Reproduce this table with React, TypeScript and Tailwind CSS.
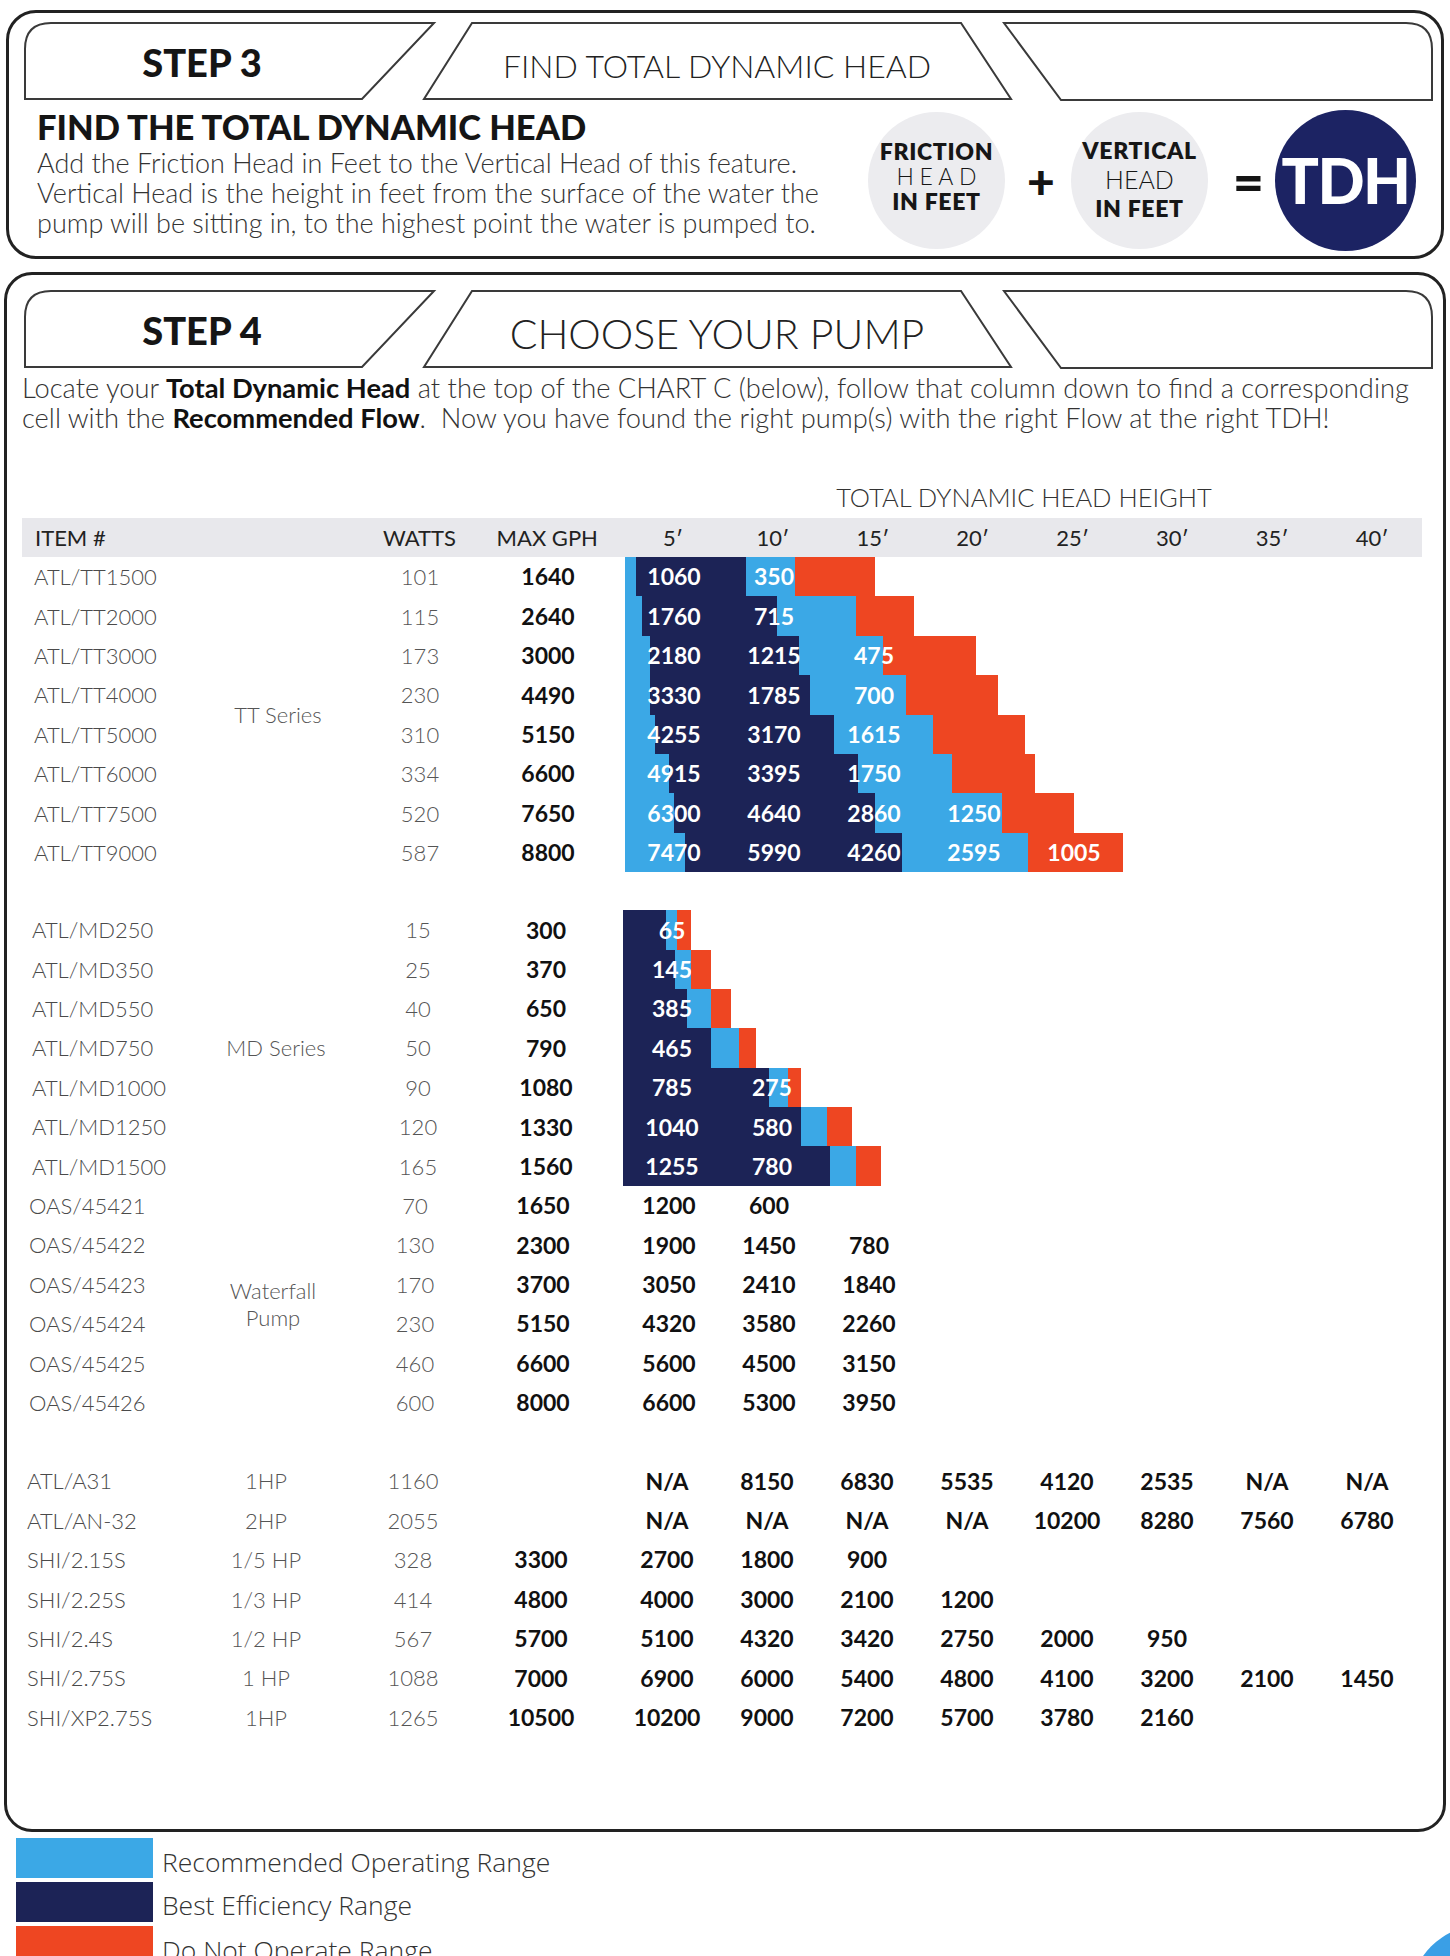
import React from "react";

const segCls = {
  l: "bg-[#3ba8e6]",
  n: "bg-[#1c2356]",
  r: "bg-[#ee4622]",
} as const;

type Seg = [keyof typeof segCls, number];

type Row = {
  item: string;
  hp?: string;
  watts: string;
  gph: string;
  vals: string[];
  seg?: Seg[];
};

type Group = {
  label?: string[];
  shift: string;
  onColor: boolean;
  rows: Row[];
};

const heads = ["5′", "10′", "15′", "20′", "25′", "30′", "35′", "40′"];

const groups: Group[] = [
  {
    label: ["TT Series"],
    shift: "",
    onColor: true,
    rows: [
      { item: "ATL/TT1500", watts: "101", gph: "1640", vals: ["1060", "350"], seg: [["l", 11], ["n", 110], ["l", 49], ["r", 80]] },
      { item: "ATL/TT2000", watts: "115", gph: "2640", vals: ["1760", "715"], seg: [["l", 17], ["n", 135], ["l", 79], ["r", 58]] },
      { item: "ATL/TT3000", watts: "173", gph: "3000", vals: ["2180", "1215", "475"], seg: [["l", 25], ["n", 149], ["l", 84], ["r", 93]] },
      { item: "ATL/TT4000", watts: "230", gph: "4490", vals: ["3330", "1785", "700"], seg: [["l", 25], ["n", 160], ["l", 96], ["r", 92]] },
      { item: "ATL/TT5000", watts: "310", gph: "5150", vals: ["4255", "3170", "1615"], seg: [["l", 30], ["n", 179], ["l", 99], ["r", 92]] },
      { item: "ATL/TT6000", watts: "334", gph: "6600", vals: ["4915", "3395", "1750"], seg: [["l", 44], ["n", 189], ["l", 94], ["r", 83]] },
      { item: "ATL/TT7500", watts: "520", gph: "7650", vals: ["6300", "4640", "2860", "1250"], seg: [["l", 49], ["n", 201], ["l", 127], ["r", 72]] },
      { item: "ATL/TT9000", watts: "587", gph: "8800", vals: ["7470", "5990", "4260", "2595", "1005"], seg: [["l", 60], ["n", 217], ["l", 126], ["r", 95]] },
    ],
  },
  {
    label: ["MD Series"],
    shift: "-ml-[2px]",
    onColor: true,
    rows: [
      { item: "ATL/MD250", watts: "15", gph: "300", vals: ["65"], seg: [["n", 43], ["l", 11], ["r", 14]] },
      { item: "ATL/MD350", watts: "25", gph: "370", vals: ["145"], seg: [["n", 52], ["l", 16], ["r", 20]] },
      { item: "ATL/MD550", watts: "40", gph: "650", vals: ["385"], seg: [["n", 64], ["l", 24], ["r", 20]] },
      { item: "ATL/MD750", watts: "50", gph: "790", vals: ["465"], seg: [["n", 88], ["l", 28], ["r", 17]] },
      { item: "ATL/MD1000", watts: "90", gph: "1080", vals: ["785", "275"], seg: [["n", 146], ["l", 19], ["r", 13]] },
      { item: "ATL/MD1250", watts: "120", gph: "1330", vals: ["1040", "580"], seg: [["n", 178], ["l", 26], ["r", 25]] },
      { item: "ATL/MD1500", watts: "165", gph: "1560", vals: ["1255", "780"], seg: [["n", 207], ["l", 26], ["r", 25]] },
    ],
  },
  {
    label: ["Waterfall", "Pump"],
    shift: "-ml-[5px]",
    onColor: false,
    rows: [
      { item: "OAS/45421", watts: "70", gph: "1650", vals: ["1200", "600"] },
      { item: "OAS/45422", watts: "130", gph: "2300", vals: ["1900", "1450", "780"] },
      { item: "OAS/45423", watts: "170", gph: "3700", vals: ["3050", "2410", "1840"] },
      { item: "OAS/45424", watts: "230", gph: "5150", vals: ["4320", "3580", "2260"] },
      { item: "OAS/45425", watts: "460", gph: "6600", vals: ["5600", "4500", "3150"] },
      { item: "OAS/45426", watts: "600", gph: "8000", vals: ["6600", "5300", "3950"] },
    ],
  },
];

const bottom: Group = {
  shift: "-ml-[7px]",
  onColor: false,
  rows: [
    { item: "ATL/A31", hp: "1HP", watts: "1160", gph: "", vals: ["N/A", "8150", "6830", "5535", "4120", "2535", "N/A", "N/A"] },
    { item: "ATL/AN-32", hp: "2HP", watts: "2055", gph: "", vals: ["N/A", "N/A", "N/A", "N/A", "10200", "8280", "7560", "6780"] },
    { item: "SHI/2.15S", hp: "1/5 HP", watts: "328", gph: "3300", vals: ["2700", "1800", "900"] },
    { item: "SHI/2.25S", hp: "1/3 HP", watts: "414", gph: "4800", vals: ["4000", "3000", "2100", "1200"] },
    { item: "SHI/2.4S", hp: "1/2 HP", watts: "567", gph: "5700", vals: ["5100", "4320", "3420", "2750", "2000", "950"] },
    { item: "SHI/2.75S", hp: "1 HP", watts: "1088", gph: "7000", vals: ["6900", "6000", "5400", "4800", "4100", "3200", "2100", "1450"] },
    { item: "SHI/XP2.75S", hp: "1HP", watts: "1265", gph: "10500", vals: ["10200", "9000", "7200", "5700", "3780", "2160"] },
  ],
};

function Tabs({ left, mid, ml, midCls }: { left: string; mid: string; ml: string; midCls: string }) {
  return (
    <div className={`relative h-[80px] w-[1420px] ${ml}`}>
      <svg className="absolute inset-0" width="1420" height="80" viewBox="0 0 1420 80" fill="white" stroke="#3a3a3a" strokeWidth="2">
        <path d="M7 77 L7 27 Q7 1 33 1 L416 1 L344 77 Z" />
        <path d="M454 1 L943 1 L993 77 L406 77 Z" />
        <path d="M986 1 L1388 1 Q1414 1 1414 27 L1414 78 L1043 78 Z" />
      </svg>
      <div className="relative flex h-full items-center">
        <div className="w-[368px] text-center text-[38px] font-black leading-none text-[#151515]">{left}</div>
        <div className={`w-[662px] text-center font-light leading-none text-[#222] ${midCls}`}>{mid}</div>
      </div>
    </div>
  );
}

function DataRow({ r, onColor }: { r: Row; onColor: boolean }) {
  return (
    <div className="flex h-[39.4px] items-center">
      <div className="w-[152px] text-center text-[22px] font-light text-[#555]">{r.watts}</div>
      <div className="w-[104px] text-center text-[23px] font-bold text-[#111]">{r.gph}</div>
      <div className="w-[24px]" />
      <div className="relative h-full w-[800px]">
        {r.seg && (
          <div className="absolute inset-y-0 left-px flex">
            {r.seg.map(([c, w], i) => (
              <div key={i} className={`h-full ${segCls[c]}`} style={{ width: w }} />
            ))}
          </div>
        )}
        <div className="relative grid h-full grid-cols-8 items-center">
          {r.vals.map((v, i) => (
            <div key={i} className={`text-center text-[23px] font-bold ${onColor ? "text-white" : "text-[#111]"}`}>
              {v}
            </div>
          ))}
        </div>
      </div>
    </div>
  );
}

function GroupBlock({ g }: { g: Group }) {
  return (
    <div className={`flex ${g.shift}`}>
      <div className="w-[190px]">
        {g.rows.map((r) => (
          <div key={r.item} className="flex h-[39.4px] items-center pl-[12px] text-[22px] font-light text-[#4a4a4a]">
            {r.item}
          </div>
        ))}
      </div>
      {g.label ? (
        <div className="flex w-[132px] flex-col items-center justify-center text-[22px] font-light leading-[27px] text-[#555]">
          {g.label.map((l) => (
            <span key={l}>{l}</span>
          ))}
        </div>
      ) : (
        <div className="w-[132px]">
          {g.rows.map((r) => (
            <div key={r.item} className="flex h-[39.4px] items-center justify-center pr-[10px] text-[22px] font-light text-[#555]">
              {r.hp}
            </div>
          ))}
        </div>
      )}
      <div>
        {g.rows.map((r) => (
          <DataRow key={r.item} r={r} onColor={g.onColor} />
        ))}
      </div>
    </div>
  );
}

function Circle({ top, mid, bottom, spaced }: { top: string; mid: string; bottom: string; spaced?: boolean }) {
  return (
    <div
      className={`flex h-[137px] w-[137px] flex-col items-center justify-center rounded-full bg-[#ececef] text-[23px] text-[#161616] ${
        spaced ? "gap-[3px] pb-[10px]" : "gap-[7px] pb-[4px]"
      }`}
    >
      <div className="font-extrabold leading-[22px] tracking-[0.03em]">{top}</div>
      <div className={`font-light leading-[22px] ${spaced ? "pl-[0.24em] tracking-[0.24em]" : "text-[25px]"}`}>{mid}</div>
      <div className="font-extrabold leading-[22px] tracking-[0.03em]">{bottom}</div>
    </div>
  );
}

export default function App() {
  return (
    <div className="relative h-[1956px] w-[1450px] overflow-hidden bg-white font-['Lato','Noto_Sans',sans-serif] text-[#222]">
      {/* Step 3 */}
      <section className="ml-[6px] mt-[10px] h-[249px] w-[1438px] rounded-[30px] border-[3px] border-[#222]">
        <Tabs left="STEP 3" mid="FIND TOTAL DYNAMIC HEAD" ml="ml-[9px] mt-[9px]" midCls="text-[32px] pt-[8px]" />
        <div className="flex">
          <div className="w-[859px] pl-[28px]">
            <h2 className="mt-[8px] text-[34.5px] font-black leading-none text-[#151515]">FIND THE TOTAL DYNAMIC HEAD</h2>
            <p className="mt-[3px] text-[27px] font-light leading-[30px] text-[#333]">
              Add the Friction Head in Feet to the Vertical Head of this feature.
              <br />
              Vertical Head is the height in feet from the surface of the water the
              <br />
              pump will be sitting in, to the highest point the water is pumped to.
            </p>
          </div>
          <div className="mt-[8px] flex items-center">
            <Circle top="FRICTION" mid="HEAD" bottom="IN FEET" spaced />
            <div className="w-[66px] pl-[6px] text-center text-[48px] font-black leading-none text-[#151515]">+</div>
            <Circle top="VERTICAL" mid="HEAD" bottom="IN FEET" />
            <div className="w-[67px] pl-[14px] text-center text-[54px] font-black leading-none text-[#151515]">=</div>
            <div className="flex h-[141px] w-[141px] items-center justify-center rounded-full bg-[#1c2363] text-[62px] font-black tracking-tight text-white">
              TDH
            </div>
          </div>
        </div>
      </section>

      {/* Step 4 */}
      <section className="ml-[4px] mt-[13px] h-[1560px] w-[1442px] rounded-[28px] border-[3px] border-[#222]">
        <Tabs left="STEP 4" mid="CHOOSE YOUR PUMP" ml="ml-[11px] mt-[15px]" midCls="text-[41px] pt-[6px]" />
        <p className="ml-[15px] mt-[3px] text-[27.3px] font-light leading-[30px] text-[#333]">
          Locate your <b className="font-bold text-[#111]">Total Dynamic Head</b> at the top of the CHART C (below), follow that column down to find a corresponding
          <br />
          cell with the <b className="font-bold text-[#111]">Recommended Flow</b>.&nbsp; Now you have found the right pump(s) with the right Flow at the right TDH!
        </p>

        <div className="ml-[15px]">
          <div className="ml-[602px] mt-[49px] w-[800px] text-center text-[25.5px] font-light leading-[30px] text-[#333]">TOTAL DYNAMIC HEAD HEIGHT</div>

          <div className="mt-[6px] flex h-[39px] w-[1400px] items-center bg-[#e8e8ec] text-[22px] text-[#222]">
            <div className="w-[190px] pl-[13px]">ITEM #</div>
            <div className="w-[132px]" />
            <div className="w-[152px] text-center">WATTS</div>
            <div className="w-[104px] text-center">MAX GPH</div>
            <div className="w-[24px]" />
            <div className="grid w-[800px] grid-cols-8">
              {heads.map((h) => (
                <div key={h} className="text-center">
                  {h}
                </div>
              ))}
            </div>
          </div>

          <GroupBlock g={groups[0]} />
          <div className="h-[38px]" />
          <GroupBlock g={groups[1]} />
          <GroupBlock g={groups[2]} />
          <div className="h-[39px]" />
          <GroupBlock g={bottom} />
        </div>
      </section>

      {/* Legend */}
      <div className="ml-[16px] mt-[6px] flex flex-col gap-[4px] font-['Open_Sans','Lato',sans-serif] text-[26.5px] font-light leading-[32px] text-[#333]">
        <div className="flex h-[40px] items-center gap-[9px]">
          <div className="h-full w-[137px] bg-[#3ba8e6]" />
          <span className="pt-[8px]">Recommended Operating Range</span>
        </div>
        <div className="flex h-[40px] items-center gap-[9px]">
          <div className="h-full w-[137px] bg-[#1c2356]" />
          <span className="pt-[6px]">Best Efficiency Range</span>
        </div>
        <div className="flex h-[40px] items-center gap-[9px]">
          <div className="h-full w-[137px] bg-[#ee4622]" />
          <span className="pt-[8px]">Do Not Operate Range</span>
        </div>
      </div>

      <div className="absolute left-[1411px] top-[1926px] h-[138px] w-[138px] rounded-full bg-[#3a9fe6]" />
    </div>
  );
}
